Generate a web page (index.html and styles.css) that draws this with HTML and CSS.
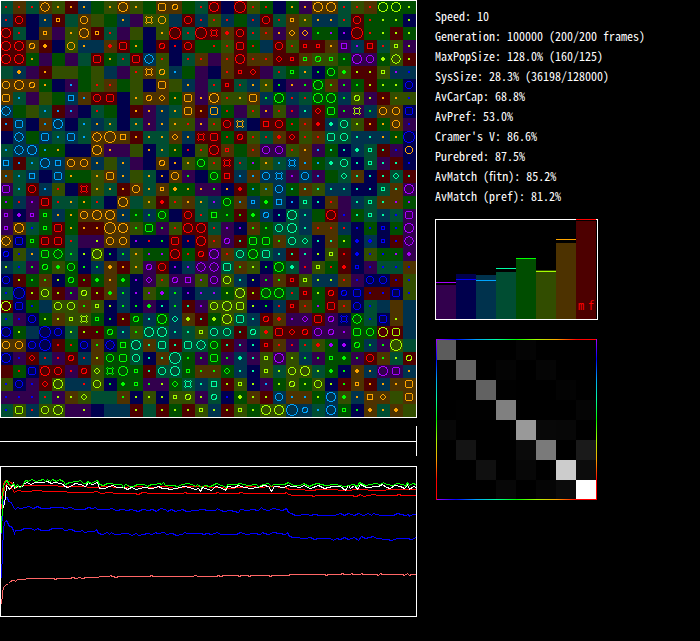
FILE: index.html
```
<!DOCTYPE html>
<html lang="en">
<head>
    <meta charset="UTF-8">
    <title>Population simulation</title>
    <link rel="stylesheet" href="styles.css">
</head>
<body>
    <main class="simulation">
        <section class="world-column">
            <svg class="plot" id="world" viewBox="0 0 417 418"></svg>
            <svg class="plot divider" viewBox="0 0 417 30">
                <path class="frame" d="M0 15.5H416M416.5 0V30"/>
            </svg>
            <svg class="plot" id="history" viewBox="0 0 417 151"></svg>
        </section>

        <section class="info-column">
            <ul class="stats">
                <li>Speed: 10</li>
                <li>Generation: 100000 (200/200 frames)</li>
                <li>MaxPopSize: 128.0% (160/125)</li>
                <li>SysSize: 28.3% (36198/128000)</li>
                <li>AvCarCap: 68.8%</li>
                <li>AvPref: 53.0%</li>
                <li>Cramer's V: 86.6%</li>
                <li>Purebred: 87.5%</li>
                <li>AvMatch (fitn): 85.2%</li>
                <li>AvMatch (pref): 81.2%</li>
            </ul>
            <svg class="plot small-plot" id="bars" viewBox="0 0 163 101"></svg>
            <svg class="plot small-plot" id="matrix" viewBox="0 0 163 161"></svg>
        </section>
    </main>
    <script src="script.js"></script>
</body>
</html>
```
FILE: styles.css
```
body {
    margin: 0;
    background-color: #000;
    color: #fff;
    font-family: "Noto Sans CJK JP", "DejaVu Sans Mono", monospace;
    font-size: 12px;
    line-height: 20px;
    font-feature-settings: "hwid";
}

.simulation {
    display: grid;
    grid-template-columns: minmax(0, 417px) minmax(0, 1fr);
    column-gap: 18px;
}

.world-column {
    display: flex;
    flex-direction: column;
}

.info-column {
    display: flex;
    flex-direction: column;
    gap: 19px;
}

.plot {
    display: block;
    width: 100%;
    shape-rendering: crispEdges;
}

.divider {
    margin: 8px 0 10px;
}

.small-plot {
    max-width: 163px;
}

.stats {
    list-style: none;
    margin: 0;
    padding: 6px 0 0;
    margin-bottom: -6px;
    white-space: nowrap;
}

.frame {
    fill: none;
    stroke: #fff;
}

.marker {
    fill: none;
}

.series {
    fill: none;
    stroke-width: 1;
}

.legend {
    fill: #f00;
    font-size: 12px;
}
```
FILE: script.js
```
const bright = {
    r: '#ff0000', o: '#ffa500', y: '#a5ff00', g: '#00ff00',
    t: '#00ffa5', s: '#00a5ff', b: '#0000ff', v: '#a500ff'
};
const dark = {
    r: '#4d0000', o: '#4d3200', y: '#324d00', g: '#004d00',
    t: '#004d32', s: '#00324d', b: '#00004d', v: '#32004d'
};

// one entry per cell: background, marker colour, marker shape
const cells = [
    'tr. or. tr. ooD yo. ro. so. g-- yo. ooC yo. g-- ooS ooo g-- tr. rrC b-- rrO yr. gr. b-- go. vo. ooC ooC tr. yr. or. gyC gyC gy.',
    'sr. rrc b-- so. roq t-- ooc y-- g-- so. v-- yox yoc s-- rrc sr. yr. sr. g-- sr. rrc tr. oo* yo. so. so. tr. rrc gr. gy. gy. by.',
    'rrC tr. b-- ooq v-- yo. ooC roq tr. v-- y-- b-- yo. rrO tr. rrO rrx or+ rrc tr. or. vo. ood vod gg. gv. bv. rrO gr. gy. ry. gy.',
    'rrC rrC ooo ro+ b-- yoc so. s-- or+ rrS go. b-- rro br. rrc g-- gr. yr. rrS gr. s-- rrc yr. rrq rrq oo. vvs sv. rrs tr. yyq vy.',
    'rrC rrC go. v-- g-- v-- t-- rrS go. tr. rrS ssD yr. b-- tr. or. v-- or. rrC or. or. rrd rrq ogq ygo ygq gg. vvC vvc gy+ yyD ry.',
    't-- so+ v-- ro. y-- y-- g-- y-- s-- v-- yr. oox yoo ss. g-- v-- b-- or. rrq rrd v-- tr. ggq to. bg. ggc yg+ ry. ry. yy* sv. sb.',
    'ooc ooC ooo go. b-- vs. g-- yr. or. g-- y-- b-- ooS y-- so. v-- tr. rrq tr. so. yo. bg. vo. vg. ggC og. vg. gg. ry. gy. gy. bbc',
    'ooS ts. v-- y-- g-- sss os. rrc rrS b-- yo. ooo ood go. ooS vo. ooC yr. yo. ooS sg. ggC sr. tr. ggC ggC sg. yyo vy. ro. yo. yb.',
    'ssD g-- y-- ts. rs. vs. b-- tr. g-- b-- ro. vo. so. to. ooS ro. soS gr. v-- yr. vo. yr. vr. st. rrd ggS vg. vyx sg. ooc ooc bbS',
    'rs. ssS b-- os. ssC b-- ts. so. to. b-- to. vo. so. yo. yr. vo. yr. rrc sox b-- rrs rrc gr. or. rr+ st+ ttc yy. ro. go. ooc vb.',
    'b-- ssD g-- ssS ts. ssS ts. ooD ooO oos ro. to. to. ood so. rrx rrS gr. rro yr. tr. or+ rrd yr. or. ttS ttc st. st. so. go. bbO',
    'ts. ssD ssC gs. go. b-- b-- ooC vo. v-- y-- bo. to. go. br. yr. rrC orq g-- or. vvc vvc yr. oo. vs. gt. bt. st+ tt* rt. vb. boc',
    'sss rs. ts. ssC sss ooc ooc so. y-- so. v-- b-- ooo bo. yo. ggc yr. rrx tr. gv. yo. ts. ssx os. gs. tt+ ttc bt. ttq vt. rt. bb.',
    'os. ts. sss b-- ssS go. g-- yo. ooS so. y-- to. bo. ooc vg. b-- ggc rrs ss. os. ssc ssx vv. ssc vs. g-- ttd ot. bt. rt. ttd rt.',
    'vvS ts. rrc ss. yr. b-- rrx yo. to. ro. ooc to. ooq go+ go. vo. vg. bo. rr+ gs. ys. ssc gt. ot. yt. st. st. bt. bt. ttq ot. vvC',
    'gv. sr. vv. rrS tr. to. go. tr. b-- ooC t-- yo. rr+ yr. oo. to. sv. ggc os. ssq gg+ sss bs. ttq bt. or. v-- st. tt* ot. ov. gv.',
    'vvq bv+ vvq ggq so. go. ooc ooC ooC so. gg. sg. ggc b-- rrc tr. ggs gg. rg. gg+ sso bt. ttC st. g-- rrC vb. gt. ttq st. tb. vvS',
    'vvq ooC tb. ggq rrS go. ro. ro. ooO ooC yg. ggS vg. yr. rrC rrC tr. vv. bv. og. gg. ttc ttC st. or. or. sr. bb. gb. bbq gb. vvC',
    'ooD bbS ggq rrS rrS tr. v-- vy. ooc ooc bv. br. bg. rrS br. rrC or. vvo rt. ggS ggS og. ttc ttd bt. ot. gy. bb+ sb+ bbq rb. vvD',
    'bbo yb. so. ggS ggD tg. by. yyC bg. sg. yo. gv. gv. rrC gr. rro vvC or. ttc ggC ttS st. rt. vt. by. yyq rr. bb+ yb. gb. gv. vv+',
    'sy. tb. vg. ggo yg+ ggc bg. sg. oo+ ro. yo. vvo rrc bv. sv. vvD vvD ttS og. yy. bg. ggC tt+ vr. yyq gr. rr+ bbq vb. tb. tb. ob.',
    'bbc ry. gg. og. by. ggo rg. gg+ oo. gg+ bv. vvd yr. vvo vvs yv. vvc yyc st. by. vg. og. rr* yyq sy. sy. or. vb. bbc bbc rb. yb.',
    'tb. bbO ry. yyc ry. vg. yyo ry. og+ sg. bv. yv. gv+ sg. bv. sv. sv. gy. yyC ry. ggC ggC tr. rrq gy. rro bbo bbS rb. rb. bbS yb.',
    'ryC bbS gb. s-- yyc yyc og. yyq by. sg. bg. vg+ bt. sg. rt. vv. yyc yyC yyS by. bg. sr. rrq or. gv. rrS or. bbc tb. s-- o-- s--',
    'tb. vb. bbc gy. oy. yyq yyx ggq bg. ry. ggo st. ggC std oy+ rt. gy+ yyC ttS st. rro or+ vv. vvd rrS vvo bbx ggD tb. bbS oy. s--',
    'bbC gy. s-- bbO bbc ty. ry. rg. ggo st. yg. ttC ttC st. tt. yyq ttc ttc rt. tto yr+ rrS rrd rro vvc vvo vv. ggS ggc ryC ryS s--',
    'ooc ooc bbc bbO rr. gr. bbc og. bbD ggs ttC ot. ttS rt. ttS ttD ggc rt. vt. bt. rrq or. vr. tr. yr+ gv+ bv+ ggo sg. vg. yyO t--',
    'bbC vb. rrd sr. vr. rro sr. oy. ggc ggS ttc bt. ot. ttO gg. vg. ggS vg. st+ vt. yyq vvC yy. sg. vg. ggq gg+ vg. rrc og. ty. ryo',
    'r-- gr. bbS rrC rrc vr. rro yyd ggx ggC gg* rt. ttc ttC ggq og. og. ggd st. bt. yyq ty. yyc yyC ty. gg+ bg. oo+ so. vvC vvS so.',
    'yb. bbc vb. rrd yyC s-- sr. yyc bg. gg+ ggq vg. vy. ggd ttx st. tts ry. yyq by. vs. gy. yyo gy. yyc by. rg. oo* ro. so. oo. ooS',
    'vb. vb. vb. tr. vy. oy. yyd t-- t-- og. by. yy. by. yy* yyo vy. tto bb. gy+ oy. ry. ssc os. os. gy. ssC yg+ so. oos ood y-- ooS',
    'tb. yyS sr. yyc yyC v-- vy. b-- s-- s-- ry. t-- ry. gy. ry. yyq sy. ry. yy* gy. yyC yyC ssO sso ts. ssC gg* bg. oo+ to. oo+ y--'
];

const shapes = {
    '+': 'M5 4.5h2M4 5.5h4M4 6.5h4M5 7.5h2',
    'q': 'M4.5 4.5h3v3h-3z',
    's': 'M3.5 3.5h5v5h-5z',
    'S': 'M3.5 2.5h5l1 1v5l-1 1h-5l-1 -1v-5z',
    'd': 'M6 3L9 6L6 9L3 6z',
    'D': 'M5 1.5h2M3 2.5h2M7 2.5h2M2.5 3v2M9.5 3v2M1.5 5v2M10.5 5v2M2.5 7v2M9.5 7v2M3 9.5h2M7 9.5h2M5 10.5h2',
    'x': 'M4 3.5h4M3.5 4v4M8.5 4v4M4 8.5h4M3.5 2v1M8.5 2v1M3.5 9v1M8.5 9v1M2 3.5h1M9 3.5h1M2 8.5h1M9 8.5h1'
};
const radii = { '*': 1.9, o: 2.5, c: 3.5, C: 4.5, O: 5.5 };

function rect(x, y, w, h, fill) {
    return `<rect x="${x}" y="${y}" width="${w}" height="${h}" fill="${fill}"/>`;
}

function marker(x, y, colour, shape) {
    if (shape === '-') return '';
    if (shape === '.') return rect(x + 5, y + 5, 2, 2, colour);
    if (radii[shape]) {
        return `<circle class="marker" cx="${x + 6}" cy="${y + 6}" r="${radii[shape]}" stroke="${colour}"/>`;
    }
    return `<path class="marker" transform="translate(${x} ${y})" d="${shapes[shape]}" stroke="${colour}"/>`;
}

function drawWorld() {
    let out = '';
    cells.forEach((line, row) => {
        line.split(' ').forEach((cell, col) => {
            const x = col * 13;
            const y = row * 13 + 1;
            out += rect(x, y, 13, 13, dark[cell[0]]);
            out += marker(x, y, bright[cell[1]], cell[2]);
        });
    });
    out += '<rect class="frame" x="0.5" y="0.5" width="416" height="417"/>';
    document.getElementById('world').innerHTML = out;
}

const series = [
    ['#ff6666', '1,138 2,127 3,121 5,119 8,117 10,115 12,114 14,114 15,115 17,113 25,113 26,112 53,112 55,113 57,112 70,112 72,111 76,112 79,111 82,112 86,111 98,111 99,110 109,110 110,109 112,110 116,111 118,110 149,110 151,109 153,110 192,110 195,109 198,110 216,110 218,109 220,110 224,109 237,109 239,110 241,109 247,109 249,110 251,109 268,109 270,110 272,109 288,109 290,108 324,108 326,109 328,108 340,108 342,107 344,108 350,108 351,107 353,108 360,108 361,107 363,108 376,108 378,109 380,107 382,108 402,108 404,109 407,107 409,109 411,108 416,108'],
    ['#0000ff', '1,112 2,84 3,64 4,56 6,54 8,58 9,60 11,60 13,64 14,67 15,64 20,64 24,62 31,62 34,64 37,62 41,64 48,64 52,62 62,62 64,64 71,63 75,65 79,65 82,64 84,66 89,65 94,65 96,63 98,67 102,68 107,66 109,68 111,66 114,68 128,67 131,69 136,67 138,69 143,68 147,67 152,68 155,66 157,67 164,66 166,68 172,67 176,69 182,68 184,66 187,67 201,67 203,68 207,67 211,68 217,66 220,68 232,68 236,68 240,66 246,68 254,67 260,68 262,66 264,67 268,68 273,66 285,68 287,66 289,70 293,71 305,72 310,71 314,73 318,72 330,72 333,74 336,72 340,73 344,71 348,73 354,71 358,74 361,70 365,72 373,70 376,72 387,73 391,74 397,72 407,72 411,73 416,71'],
    ['#0000ff', '1,68 2,42 3,36 5,31 7,31 8,35 11,36 13,41 15,43 17,41 20,42 25,41 28,40 33,42 37,40 41,42 48,42 52,41 62,41 64,42 71,41 74,43 84,43 88,41 92,42 95,41 97,43 108,43 111,42 116,44 122,43 127,44 131,43 134,44 138,45 142,43 148,44 152,43 156,45 160,42 165,43 167,45 171,43 175,45 182,43 186,45 196,44 202,43 208,44 215,44 217,42 220,44 224,45 230,44 234,45 238,46 240,43 247,44 252,43 258,44 261,41 263,43 268,44 273,42 282,44 286,42 288,46 291,47 295,49 307,48 310,49 314,48 320,49 334,49 340,47 344,49 348,47 354,49 358,47 363,49 368,47 371,49 373,47 380,49 393,49 397,47 405,49 408,48 409,50 412,48 416,48'],
    ['#ff0000', '1,43 2,32 4,22 6,17 9,19 12,23 14,26 17,24 24,25 40,24 43,25 62,25 70,26 83,26 90,26 97,25 100,27 109,26 116,27 134,27 138,28 142,26 150,27 182,27 185,26 187,27 215,27 217,26 220,27 238,27 240,26 245,27 284,27 286,26 288,28 293,29 311,29 313,30 316,29 330,29 350,29 356,30 360,28 363,30 373,28 378,29 396,29 398,28 402,29 416,29'],
    ['#ff0000', '1,33 3,18 5,14 8,15 11,16 13,20 15,22 18,20 23,19 36,19 50,19 65,20 75,20 97,21 105,20 120,21 135,20 150,21 165,20 175,22 188,20 200,20 216,21 230,22 250,20 260,21 270,20 285,21 287,22 289,23 295,23 314,24 316,23 320,23 330,23 345,24 359,23 376,24 395,23 416,23'],
    ['#ffffff', '2,43 4,37 5,30 6,19 8,21 9,23 11,21 13,17 14,22 17,20 22,20 24,17 27,16 30,18 35,16 42,16 47,15 51,17 54,16 60,17 63,18 64,20 68,21 75,17 80,18 85,20 88,16 92,18 97,16 99,22 104,22 109,20 112,19 117,21 123,21 127,23 131,21 136,23 143,21 152,22 158,20 162,22 166,22 170,23 176,22 183,20 189,21 195,23 198,22 200,25 202,21 208,23 211,24 215,20 220,21 225,24 227,20 234,21 238,19 244,21 251,22 256,21 264,19 268,20 271,25 274,20 284,21 287,19 292,20 300,21 303,19 310,22 318,19 324,22 332,20 340,20 345,24 348,19 350,22 354,19 357,23 360,18 366,21 378,20 382,18 386,21 390,22 394,19 400,20 404,22 407,18 409,23 413,20 416,21'],
    ['#00ff00', '1,67 2,32 3,20 5,15 7,14 8,18 11,19 13,17 15,21 17,18 19,21 22,20 24,15 26,14 28,15 31,13 36,15 39,14 43,13 45,15 47,13 50,15 52,13 56,15 59,13 63,15 65,18 69,16 77,15 80,14 83,17 86,17 87,15 91,17 94,15 97,14 99,18 103,19 107,17 110,17 115,18 121,18 123,21 125,18 130,20 133,20 137,18 144,18 147,20 151,18 154,18 159,17 161,18 163,16 165,19 173,19 177,20 182,18 187,17 192,18 195,20 197,18 201,21 204,19 210,20 216,17 221,19 226,21 227,18 237,18 239,17 248,19 256,18 258,20 263,18 268,17 271,20 273,18 284,18 288,16 293,19 300,19 303,17 309,20 313,18 317,17 325,19 335,18 344,20 353,18 357,20 359,16 365,19 375,17 380,18 383,16 386,18 393,19 396,17 403,18 405,20 407,16 409,19 412,17 416,18']
];

function drawHistory() {
    let out = series.map(([colour, points]) =>
        `<polyline class="series" transform="translate(0.5 0.5)" points="${points}" stroke="${colour}"/>`
    ).join('');
    out += '<rect class="frame" x="0.5" y="0.5" width="416" height="150"/>';
    document.getElementById('history').innerHTML = out;
}

// colour, bar top, line position
const groups = [
    ['v', 66, 63], ['b', 55, 60], ['s', 56, 61], ['t', 53, 49],
    ['g', 39, 39], ['y', 51, 52], ['o', 24, 20], ['r', 2, 0]
];

function drawBars() {
    let out = '';
    groups.forEach(([colour, top], i) => {
        out += rect(i * 20 + 1, top, 20, 100 - top, dark[colour]);
    });
    out += '<rect class="frame" x="0.5" y="0.5" width="162" height="100"/>';
    groups.forEach(([colour, top, line], i) => {
        out += rect(i * 20 + 1, line, 20, 1, bright[colour]);
    });
    out += '<text class="legend" x="143" y="91">m</text><text class="legend" x="153" y="91">f</text>';
    document.getElementById('bars').innerHTML = out;
}

const matches = [
    [92, 0, 0, 0, 4, 0, 0, 0],
    [2, 100, 0, 4, 0, 5, 0, 0],
    [0, 0, 98, 1, 0, 0, 3, 0],
    [0, 1, 1, 128, 0, 0, 0, 5],
    [7, 0, 0, 0, 153, 8, 7, 0],
    [0, 20, 0, 0, 10, 122, 0, 26],
    [0, 0, 16, 0, 7, 0, 204, 12],
    [0, 0, 0, 7, 0, 5, 11, 255]
];

function drawMatrix() {
    const stops = Array.from('vbstgyor').map((c, i) =>
        `<stop offset="${i / 8}" stop-color="${bright[c]}"/>`
    ).join('');
    let out = `<defs><linearGradient id="across">${stops}</linearGradient>
        <linearGradient id="down" x2="0" y2="1">${stops}</linearGradient></defs>`;
    matches.forEach((line, row) => {
        line.forEach((value, col) => {
            out += rect(col * 20 + 1, row * 20 + 1, 20, 20, `rgb(${value}, ${value}, ${value})`);
        });
    });
    out += rect(1, 0, 161, 1, 'url(#across)') + rect(1, 160, 161, 1, 'url(#across)');
    out += rect(1, 0, 1, 161, 'url(#down)') + rect(161, 0, 1, 161, 'url(#down)');
    document.getElementById('matrix').innerHTML = out;
}

drawWorld();
drawHistory();
drawBars();
drawMatrix();
```
